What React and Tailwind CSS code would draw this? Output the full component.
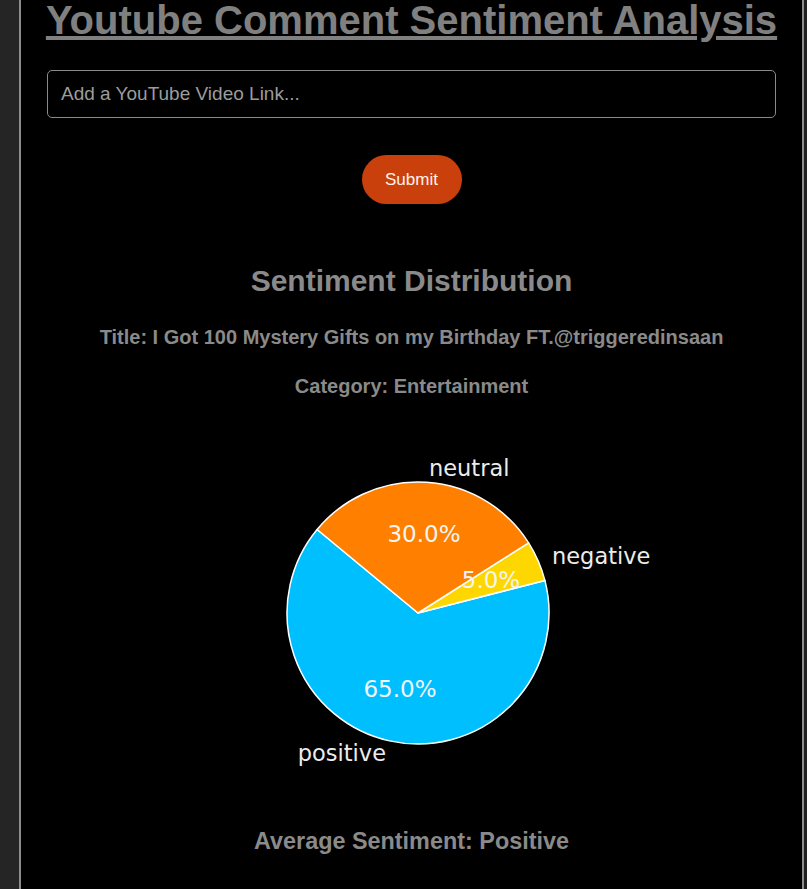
import React from "react";

function Pie() {
  const cx = 397, cy = 183, r = 131;
  return (
    <svg width="781" height="350" viewBox="0 0 781 350" className="block">
      <path d={`M${cx},${cy} L296.1,99.5 A${r},${r} 0 1 0 523.9,150.4 Z`} fill="#00bfff" stroke="#ffffff" strokeWidth="1.5" strokeLinejoin="round" />
      <path d={`M${cx},${cy} L523.9,150.4 A${r},${r} 0 0 0 507.6,112.8 Z`} fill="#ffd700" stroke="#ffffff" strokeWidth="1.5" strokeLinejoin="round" />
      <path d={`M${cx},${cy} L507.6,112.8 A${r},${r} 0 0 0 296.1,99.5 Z`} fill="#ff7f00" stroke="#ffffff" strokeWidth="1.5" strokeLinejoin="round" />
      <g fontFamily="'DejaVu Sans', sans-serif" fontSize="22.5" fill="#ececec">
        <text x="408" y="38" dominantBaseline="central" textAnchor="start">neutral</text>
        <text x="531" y="126" dominantBaseline="central" textAnchor="start">negative</text>
        <text x="365" y="323" dominantBaseline="central" textAnchor="end">positive</text>
      </g>
      <g fontFamily="'DejaVu Sans', sans-serif" fontSize="23" fill="#f4f4f4" textAnchor="middle">
        <text x="403" y="104" dominantBaseline="central">30.0%</text>
        <text x="470" y="150" dominantBaseline="central">5.0%</text>
        <text x="379" y="259" dominantBaseline="central">65.0%</text>
      </g>
    </svg>
  );
}

export default function App() {
  return (
    <div className="flex h-[889px] overflow-hidden bg-[#252525]" style={{ fontFamily: "'Liberation Sans', Arial, sans-serif" }}>
      <div className="w-[19px] shrink-0 bg-[#252525]" />
      <div className="w-[785px] shrink-0 border-x-2 border-[#8d8d8d] bg-black flex flex-col items-center">
        <h1 className="text-[40px] leading-[40px] font-bold text-[#808080] underline whitespace-nowrap">
          Youtube Comment Sentiment Analysis
        </h1>
        <input
          type="text"
          placeholder="Add a YouTube Video Link..."
          className="mt-[30px] w-[729px] h-[48px] shrink-0 rounded-[5px] border border-[#8a8a8a] bg-black px-[13px] text-[19px] text-[#cccccc] placeholder:text-[#9c9c9c] outline-none"
        />
        <button className="mt-[37px] w-[100px] h-[49px] shrink-0 rounded-full bg-[#c9400c] text-[17px] text-[#fff3e8]">
          Submit
        </button>
        <h2 className="mt-[59px] text-[30px] leading-[35px] font-bold text-[#8a8a8a]">Sentiment Distribution</h2>
        <p className="mt-[28px] text-[20px] leading-[23px] font-bold text-[#8a8a8a] whitespace-nowrap">
          Title: I Got 100 Mystery Gifts on my Birthday FT.@triggeredinsaan
        </p>
        <p className="mt-[26px] text-[20px] leading-[23px] font-bold text-[#8a8a8a]">Category: Entertainment</p>
        <div className="mt-[32px] w-full shrink-0">
          <Pie />
        </div>
        <h3 className="mt-[48px] text-[23.4px] leading-[27px] font-bold text-[#8a8a8a]">Average Sentiment: Positive</h3>
      </div>
      <div className="flex-1 bg-[#1f1f1f]" />
    </div>
  );
}
